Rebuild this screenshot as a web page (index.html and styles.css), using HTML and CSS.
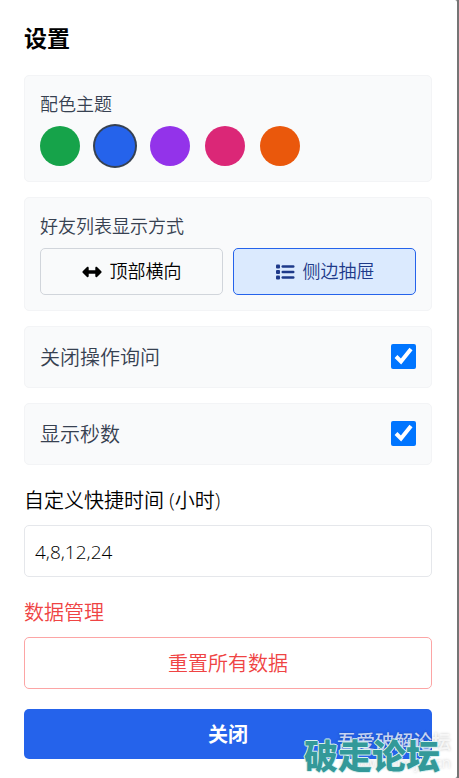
FILE: index.html
```html
<!DOCTYPE html>
<html lang="zh-CN">
<head>
<meta charset="utf-8">
<meta name="viewport" content="width=device-width, initial-scale=1">
<title>设置</title>
<link rel="stylesheet" href="styles.css">
</head>
<body>
<main class="panel">
  <h1 class="title">设置</h1>

  <section class="card">
    <h2 class="card-label">配色主题</h2>
    <div class="swatches">
      <button type="button" class="swatch green" aria-label="绿色"></button>
      <button type="button" class="swatch blue selected" aria-label="蓝色" aria-pressed="true"></button>
      <button type="button" class="swatch purple" aria-label="紫色"></button>
      <button type="button" class="swatch pink" aria-label="粉色"></button>
      <button type="button" class="swatch orange" aria-label="橙色"></button>
    </div>
  </section>

  <section class="card">
    <h2 class="card-label">好友列表显示方式</h2>
    <div class="modes">
      <button type="button" class="mode">
        <svg class="icon" viewBox="0 0 20 20" aria-hidden="true"><path fill="currentColor" d="M.7 9.200 5 5.100c.8-.7 1.700-.2 1.700.8v2.400h6.600V5.900c0-1 .9-1.500 1.700-.8l4.300 4.100c.5.500.5 1.100 0 1.600L15 14.900c-.8.700-1.700.2-1.700-.8v-2.400H6.700v2.400c0 1-.9 1.500-1.700.8L.7 10.800c-.5-.5-.5-1.100 0-1.600z"/></svg>
        <span>顶部横向</span>
      </button>
      <button type="button" class="mode active" aria-pressed="true">
        <svg class="icon" viewBox="0 0 20 20" aria-hidden="true"><g fill="currentColor"><rect x="1" y="2.500" width="4" height="4" rx="1"/><rect x="1" y="8" width="4" height="4" rx="1"/><rect x="1" y="13.500" width="4" height="4" rx="1"/><rect x="6.500" y="3.300" width="13" height="2.400" rx="1.200"/><rect x="6.500" y="8.800" width="13" height="2.400" rx="1.200"/><rect x="6.500" y="14.300" width="13" height="2.400" rx="1.200"/></g></svg>
        <span>侧边抽屉</span>
      </button>
    </div>
  </section>

  <div class="card row">
    <label for="confirm">关闭操作询问</label>
    <input type="checkbox" class="check" id="confirm" checked>
  </div>

  <div class="card row">
    <label for="seconds">显示秒数</label>
    <input type="checkbox" class="check" id="seconds" checked>
  </div>

  <div class="field">
    <label for="hours">自定义快捷时间 (小时)</label>
    <input type="text" class="text-box" id="hours" value="4,8,12,24">
  </div>

  <section class="field danger">
    <h2 class="field-title">数据管理</h2>
    <button type="button" class="reset">重置所有数据</button>
  </section>

  <button type="button" class="close">关闭</button>

  <div class="stamp">
    <span class="stamp-name">吾爱破解论坛</span>
    <span class="stamp-url">www.52pojie.cn</span>
  </div>
  <div class="mark">破走论坛</div>
</main>
</body>
</html>
```

FILE: styles.css
```css
* {
  box-sizing: border-box;
}

body {
  margin: 0;
  background: #757575;
  color: #000;
  font-family: "Open Sans", "Noto Sans CJK SC", sans-serif;
  font-size: 20px;
  font-weight: 350;
  line-height: 32px;
}

h1,
h2 {
  margin: 0;
}

button,
input {
  margin: 0;
  font: inherit;
  color: inherit;
}

.panel {
  position: relative;
  display: flex;
  flex-direction: column;
  min-height: 100vh;
  margin-right: 2px;
  padding: 22px 25px 19px 24px;
  background: #fff;
  border-radius: 0 2px 2px 0;
}

.title {
  margin-bottom: 21px;
  font-size: 23px;
  font-weight: 700;
}

.card {
  margin-bottom: 15px;
  padding: 15px;
  background: #f9fafb;
  border: 1px solid #f3f4f6;
  border-radius: 5px;
  color: #374151;
}

.card-label {
  margin-bottom: 8px;
  font-size: 18px;
  font-weight: inherit;
  line-height: 27px;
}

.swatches {
  display: flex;
  gap: 15px;
}

.swatch {
  width: 40px;
  height: 40px;
  padding: 0;
  border: 0;
  border-radius: 50%;
}

.selected {
  box-shadow: 0 0 0 2px #374151;
}

.green { background: #16a34a; }
.blue { background: #2563eb; }
.purple { background: #9333ea; }
.pink { background: #db2777; }
.orange { background: #ea580c; }

.modes {
  display: flex;
  gap: 10px;
}

.mode {
  display: flex;
  flex: 1;
  align-items: center;
  justify-content: center;
  gap: 8px;
  padding: 10px;
  background: transparent;
  border: 1px solid #d1d5db;
  border-radius: 5px;
  color: #000;
  font-size: 18px;
  line-height: 25px;
}

.active {
  background: #dbeafe;
  border-color: #2563eb;
  color: #1e3a8a;
}

.icon {
  width: 20px;
  height: 20px;
}

.row {
  display: flex;
  align-items: flex-start;
  justify-content: space-between;
  padding-bottom: 13px;
}

.check {
  width: 25px;
  height: 25px;
  margin: 2px 0;
}

.field {
  display: flex;
  flex-direction: column;
  gap: 8px;
  margin: 5px 0 15px;
}

.field-title {
  font-size: 20px;
  font-weight: inherit;
}

.text-box {
  width: 100%;
  padding: 10px 10px 8px;
  border: 1px solid #e5e7eb;
  border-radius: 5px;
  background: #fff;
  font-size: 19px;
}

.danger {
  margin-bottom: 20px;
  color: #ef4444;
}

.reset {
  padding: 10px 10px 8px;
  background: #fff;
  border: 1px solid #fca5a5;
  border-radius: 5px;
}

.close {
  padding: 10px 10px 8px;
  background: #2563eb;
  border: 0;
  border-radius: 5px;
  color: #fff;
  font-weight: 700;
}

.stamp {
  position: absolute;
  right: 6px;
  bottom: 6px;
  display: flex;
  flex-direction: column;
  align-items: flex-end;
  color: rgba(255, 255, 255, 0.75);
  font-size: 19px;
  font-weight: 500;
  line-height: 20px;
  text-shadow: 0 0 3px rgba(0, 0, 0, 0.25);
  pointer-events: none;
}

.stamp-url {
  font-size: 15px;
}

.mark {
  position: absolute;
  right: 17px;
  bottom: 2px;
  color: #339999;
  font-size: 34px;
  font-weight: 900;
  line-height: 40px;
  text-shadow: 1px 0 #d9f0f0, -1px 0 #d9f0f0, 0 1px #d9f0f0, 0 -1px #d9f0f0;
  pointer-events: none;
}
```
